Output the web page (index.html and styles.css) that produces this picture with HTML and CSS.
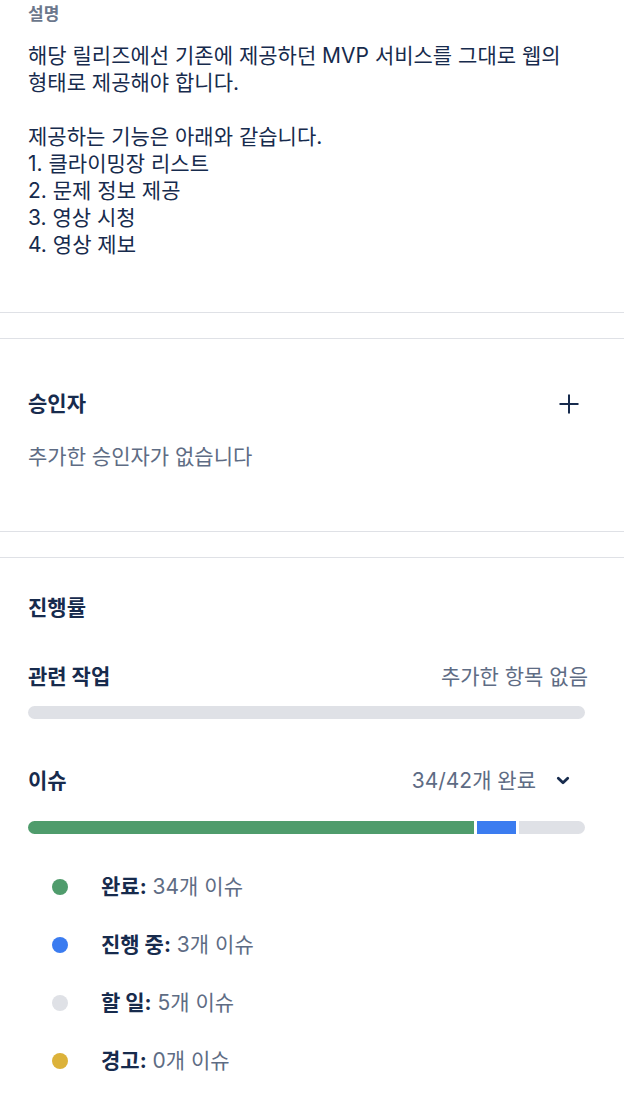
FILE: index.html
```html
<!DOCTYPE html>
<html lang="ko">
<head>
    <meta charset="UTF-8">
    <meta name="viewport" content="width=device-width, initial-scale=1.0">
    <title>릴리즈 상세</title>
    <link rel="stylesheet" href="styles.css">
</head>
<body>

<!-- 설명 -->
<div class="section desc">
    <div class="desc-label">설명</div>
    <div class="desc-body">해당 릴리즈에선 기존에 제공하던 MVP 서비스를 그대로 웹의
형태로 제공해야 합니다.

제공하는 기능은 아래와 같습니다.
1. 클라이밍장 리스트
2. 문제 정보 제공
3. 영상 시청
4. 영상 제보</div>
</div>

<div class="spacer"></div>

<!-- 승인자 -->
<div class="section approvers">
    <div class="row">
        <span class="title">승인자</span>
        <button class="icon-btn" aria-label="승인자 추가">
            <svg width="22" height="22" viewBox="0 0 22 22">
                <path d="M11 1.5v19M1.5 11h19" stroke="#172b4d" stroke-width="2" fill="none"/>
            </svg>
        </button>
    </div>
    <div class="empty">추가한 승인자가 없습니다</div>
</div>

<div class="spacer"></div>

<!-- 진행률 -->
<div class="section progress">
    <div class="title">진행률</div>

    <div class="row sub">
        <span class="title">관련 작업</span>
        <span class="muted">추가한 항목 없음</span>
    </div>
    <div class="bar"></div>

    <div class="row sub issues">
        <span class="title">이슈</span>
        <span class="muted">34/42개 완료
            <svg class="chevron" width="14" height="14" viewBox="0 0 14 14">
                <path d="M2.3 4.3l4.7 4.5 4.7-4.5" stroke="#172b4d" stroke-width="2.8" fill="none" stroke-linecap="round" stroke-linejoin="round"/>
            </svg>
        </span>
    </div>
    <div class="bar split">
        <div class="seg done" style="flex: 34"></div>
        <div class="seg doing" style="flex: 3"></div>
        <div class="seg todo" style="flex: 5"></div>
    </div>

    <ul class="legend">
        <li><span class="dot done"></span><b>완료:</b> 34개 이슈</li>
        <li><span class="dot doing"></span><b>진행 중:</b> 3개 이슈</li>
        <li><span class="dot todo"></span><b>할 일:</b> 5개 이슈</li>
        <li><span class="dot warn"></span><b>경고:</b> 0개 이슈</li>
    </ul>
</div>

</body>
</html>
```

FILE: styles.css
```css
body {
    margin: 0;
    font-family: Inter, "Noto Sans CJK KR", sans-serif;
    color: #172b4d;
    background: #fff;
}
.section {
    padding: 0 39px 0 28px;
}
.spacer {
    height: 25px;
    border-top: 1px solid #dfe1e6;
    border-bottom: 1px solid #dfe1e6;
}

/* description */
.desc {
    padding-top: 4px;
    padding-bottom: 54px;
}
.desc-label {
    font-size: 17px;
    line-height: 20px;
    font-weight: 700;
    color: #6b778c;
}
.desc-body {
    margin-top: 18px;
    font-size: 21px;
    line-height: 27px;
    white-space: pre-line;
}

/* shared rows */
.row {
    display: flex;
    align-items: center;
    justify-content: space-between;
}
.title {
    font-size: 21px;
    line-height: 24px;
    font-weight: 700;
}
.muted {
    font-size: 21px;
    line-height: 24px;
    color: #5e6c84;
    display: flex;
    align-items: center;
}

/* approvers */
.approvers {
    padding-top: 53px;
    padding-bottom: 62px;
}
.icon-btn {
    background: none;
    border: none;
    padding: 0;
    margin-right: 5px;
    cursor: pointer;
    display: flex;
}
.empty {
    margin-top: 29px;
    font-size: 21px;
    line-height: 24px;
    color: #5e6c84;
}

/* progress */
.progress {
    padding-top: 38px;
}
.progress .sub {
    margin-top: 45px;
}
.progress .sub .muted {
    margin-right: -3px;
}
.progress .issues {
    margin-top: 50px;
}
.progress .issues .muted {
    margin-right: 15px;
}
.chevron {
    margin-left: 20px;
}
.bar {
    margin-top: 17px;
    height: 13px;
    border-radius: 7px;
    background: #dfe1e6;
}
.bar.split {
    margin-top: 28px;
    display: flex;
    gap: 3px;
    overflow: hidden;
    background: #fff;
}
.seg.done, .dot.done {
    background: #4f9c6c;
}
.seg.doing, .dot.doing {
    background: #3b7cf0;
}
.seg.todo, .dot.todo {
    background: #dfe1e6;
}
.dot.warn {
    background: #dcb23a;
}

.legend {
    list-style: none;
    margin: 41px 0 0;
    padding: 0 0 0 24px;
}
.legend li {
    display: flex;
    align-items: center;
    font-size: 21px;
    line-height: 24px;
    color: #5e6c84;
    margin-bottom: 34px;
    white-space: pre;
}
.legend b {
    color: #172b4d;
}
.dot {
    width: 16px;
    height: 16px;
    border-radius: 50%;
    margin-right: 33px;
}
```
